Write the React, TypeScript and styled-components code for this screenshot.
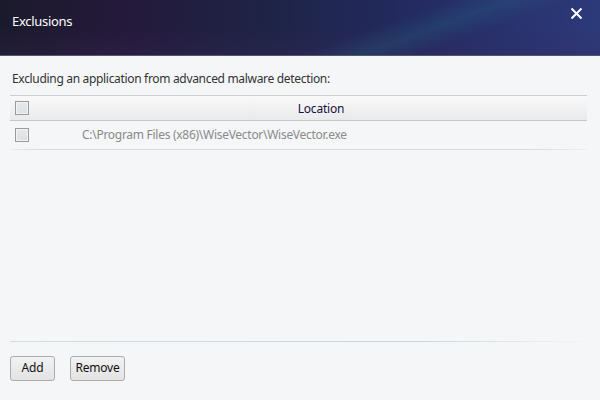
import React from "react";
import styled, { createGlobalStyle } from "styled-components";

const Global = createGlobalStyle`
  html, body { margin: 0; padding: 0; }
  body { width: 600px; height: 400px; overflow: hidden; font-family: "Noto Sans", "Open Sans", sans-serif; }
`;

const Window = styled.div`
  width: 600px;
  height: 400px;
  display: flex;
  flex-direction: column;
  background: #f4f6f7;
  position: relative;
  overflow: hidden;
`;

const Header = styled.div`
  height: 56px;
  flex: none;
  display: flex;
  justify-content: space-between;
  align-items: flex-start;
  padding: 0 17px 0 12px;
  box-sizing: border-box;
  background:
    linear-gradient(160deg, rgba(40, 110, 130, 0.0) 60%, rgba(40, 120, 140, 0.22) 68%, rgba(40, 120, 140, 0) 76%),
    linear-gradient(180deg, rgba(0,0,0,0) 50%, rgba(60, 40, 90, 0.25) 100%),
    linear-gradient(90deg, #1b1a2c 0%, #24193a 20%, #1e2446 45%, #232b62 70%, #2d3a7a 100%);
  border-bottom: 1px solid #55566c;
`;

const Title = styled.div`
  color: #ffffff;
  font-size: 13px;
  margin-top: 12px;
  letter-spacing: -0.3px;
`;

const Close = styled.svg`
  margin-top: 7px;
  width: 13px;
  height: 13px;
`;

const Body = styled.div`
  flex: 1;
  display: flex;
  flex-direction: column;
  padding: 13px 13px 0 10px;
`;

const Desc = styled.div`
  font-size: 12px;
  color: #333;
  padding-left: 2px;
  padding-top: 1px;
  height: 25px;
  letter-spacing: -0.32px;
`;

const Table = styled.div`
  display: flex;
  flex-direction: column;
`;

const HeadRow = styled.div`
  height: 24px;
  display: grid;
  grid-template-columns: 40px 1fr;
  align-items: center;
  border-top: 1px solid #c9cfd2;
  border-bottom: 1px solid #c2c9cc;
  background: linear-gradient(#f9f9f9, #e9eaeb);
  padding-left: 5px;
`;

const DataRow = styled.div`
  height: 28px;
  display: grid;
  grid-template-columns: 40px 1fr;
  align-items: center;
  padding-left: 5px;
  border-bottom: 1px solid;
  border-image: linear-gradient(90deg, rgba(215,220,222,0.3), #d6dbdd 5%, #d6dbdd 90%, rgba(215,220,222,0.2)) 1;
`;

const Check = styled.span`
  width: 12px;
  height: 12px;
  border: 1px solid #9a9a9a;
  background: linear-gradient(#e6e9eb, #dde0e2);
  box-shadow: inset 0 0 0 1px #f4f4f4;
`;

const HeadCell = styled.div`
  text-align: center;
  font-size: 12px;
  color: #1a1040;
  letter-spacing: -0.2px;
`;

const PathCell = styled.div`
  font-size: 12px;
  color: #8a8a8a;
  padding-left: 27px;
  padding-bottom: 1px;
  letter-spacing: -0.28px;
`;

const Spacer = styled.div`
  flex: 1;
`;

const Footer = styled.div`
  border-top: 1px solid;
  border-image: linear-gradient(90deg, #d4dde2, #c6d6de 70%, rgba(200,215,222,0)) 1;
  height: 59px;
  display: flex;
  gap: 15px;
  padding-top: 14px;
  box-sizing: border-box;
  margin-right: -3px;
`;

const Button = styled.button<{ w: number }>`
  width: ${(p) => p.w}px;
  height: 25px;
  border: 1px solid #acacac;
  border-radius: 3px;
  background: linear-gradient(#f2f2f2, #e3e3e3);
  font-family: "Noto Sans", sans-serif;
  font-size: 12px;
  color: #111;
  padding: 0 0 2px 0;
  letter-spacing: -0.2px;
`;

export default function App() {
  return (
    <Window>
      <Global />
      <Header>
        <Title>Exclusions</Title>
        <Close viewBox="0 0 13 13">
          <path d="M1.5 1.5 L11.5 11.5 M11.5 1.5 L1.5 11.5" stroke="#fff" strokeWidth="2" />
        </Close>
      </Header>
      <Body>
        <Desc>Excluding an application from advanced malware detection:</Desc>
        <Table>
          <HeadRow>
            <Check />
            <HeadCell>Location</HeadCell>
          </HeadRow>
          <DataRow>
            <Check />
            <PathCell>C:\Program Files (x86)\WiseVector\WiseVector.exe</PathCell>
          </DataRow>
        </Table>
        <Spacer />
        <Footer>
          <Button w={45}>Add</Button>
          <Button w={55}>Remove</Button>
        </Footer>
      </Body>
    </Window>
  );
}
